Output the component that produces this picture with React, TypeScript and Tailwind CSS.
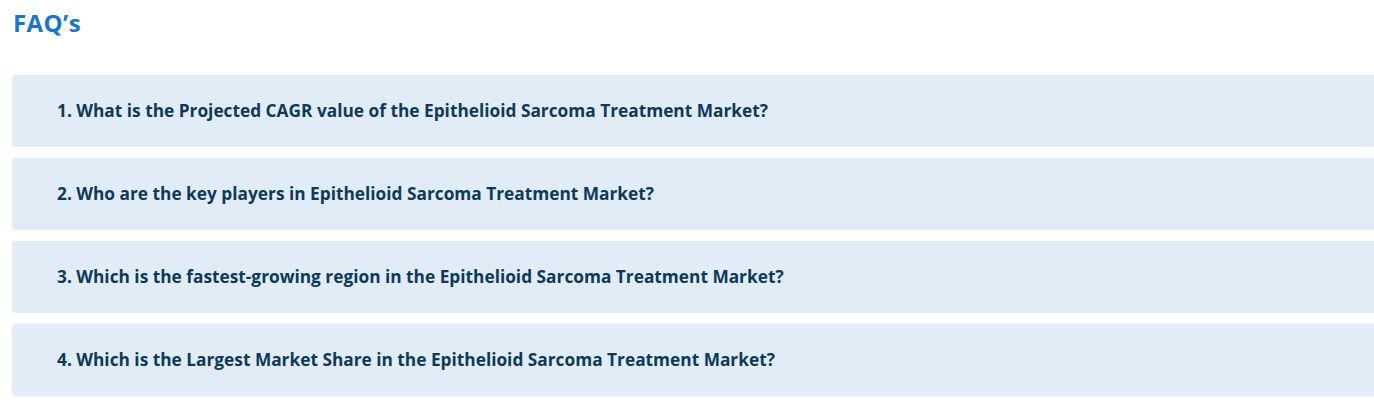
const faqs = [
  '1. What is the Projected CAGR value of the Epithelioid Sarcoma Treatment Market?',
  '2. Who are the key players in Epithelioid Sarcoma Treatment Market?',
  '3. Which is the fastest-growing region in the Epithelioid Sarcoma Treatment Market?',
  '4. Which is the Largest Market Share in the Epithelioid Sarcoma Treatment Market?',
];

export default function App() {
  return (
    <div className="bg-white pl-3 pt-[6px] font-['Open_Sans',sans-serif]">
      <h2 className="pl-px text-[24px] font-bold leading-[34px] tracking-[0.4px] text-[#1a75c9]">FAQ’s</h2>
      <div className="mt-[35px] flex w-[1400px] flex-col gap-[11px]">
        {faqs.map((q) => (
          <div key={q} className="flex h-[72px] items-center rounded bg-[#e2ecf6] pb-[1px] pl-[45px]">
            <span className="text-[17.3px] font-bold text-[#0e3a5a]">{q}</span>
          </div>
        ))}
      </div>
    </div>
  );
}
